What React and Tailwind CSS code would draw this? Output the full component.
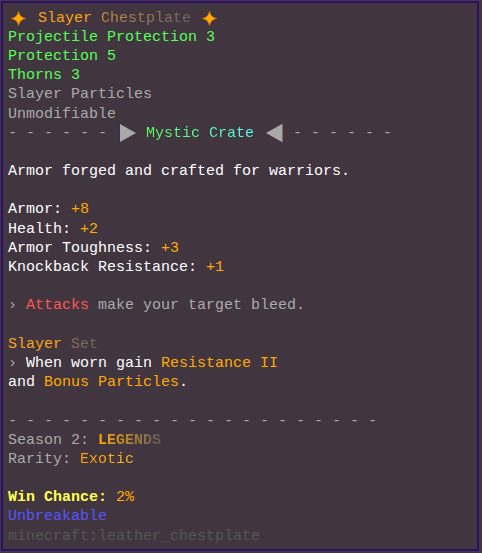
import React from 'react';

const GRAY = 'text-[#aaaaaa]';
const ORANGE = 'text-[#ffaa00]';

function Line({ children, className = '' }) {
    return <div className={`h-[19.2px] whitespace-pre ${className}`}>{children}</div>;
}

function Star() {
    return (
        <svg width="15" height="15" viewBox="0 0 16 16">
            <path d="M8 0.5 Q9.2 6.8 15.5 8 Q9.2 9.2 8 15.5 Q6.8 9.2 0.5 8 Q6.8 6.8 8 0.5Z" fill="#ffab00" stroke="#e07a00" strokeWidth="0.8" />
        </svg>
    );
}

function Arrow({ left }) {
    return (
        <svg width="17" height="18" viewBox="0 0 17 18">
            {left ? (
                <>
                    <polygon points="16,0 16,18 0,9" fill="#a9a9a9" />
                    <line x1="16.5" y1="0" x2="16.5" y2="18" stroke="#8a6a4a" strokeWidth="1" />
                </>
            ) : (
                <>
                    <polygon points="1,0 1,18 17,9" fill="#a9a9a9" />
                    <line x1="0.5" y1="0" x2="0.5" y2="18" stroke="#3b2a6a" strokeWidth="1" />
                </>
            )}
        </svg>
    );
}

function Grad({ from, to, children, bold }) {
    return (
        <span
            className={`bg-clip-text text-transparent ${bold ? 'font-bold' : ''}`}
            style={{ backgroundImage: `linear-gradient(to right, ${from}, ${to})` }}
        >
            {children}
        </span>
    );
}

export default function App() {
    return (
        <div className="w-[482px] h-[553px] bg-[#41353f] pt-[1px] pl-[1px]">
            <div className="w-[478px] h-[550px] border-2 border-[#2d0f6b] pt-[5.6px] pl-[5px] font-['Liberation_Mono',monospace] text-[15px] leading-[19.2px] text-white">
                <Line className="flex items-center">
                    <span className="w-[21px] flex"><span className="ml-[3px] flex"><Star /></span></span>
                    <span>{' '}</span>
                    <span className="text-[#f7a419]">Slayer</span>
                    <span>{' '}</span>
                    <Grad from="#c58d3e" to="#676767">Chestplate</Grad>
                    <span>{' '}</span>
                    <span className="ml-[2px] flex"><Star /></span>
                </Line>
                <Line className="text-[#55ff55]">Projectile Protection 3</Line>
                <Line className="text-[#55ff55]">Protection 5</Line>
                <Line className="text-[#55ff55]">Thorns 3</Line>
                <Line className={GRAY}>Slayer Particles</Line>
                <Line className={GRAY}>Unmodifiable</Line>
                <Line className="flex items-center">
                    <span className={GRAY}>- - - - - - </span>
                    <span className="w-[21px] flex"><span className="ml-[3px] flex"><Arrow /></span></span>
                    <span>{' '}</span>
                    <Grad from="#55ff55" to="#55ffee">Mystic Crate</Grad>
                    <span>{' '}</span>
                    <span className="w-[21px] flex"><span className="ml-[3px] flex"><Arrow left /></span></span>
                    <span className={GRAY}> - - - - - -</span>
                </Line>
                <Line>{' '}</Line>
                <Line>Armor forged and crafted for warriors.</Line>
                <Line>{' '}</Line>
                <Line>Armor: <span className={ORANGE}>+8</span></Line>
                <Line>Health: <span className={ORANGE}>+2</span></Line>
                <Line>Armor Toughness: <span className={ORANGE}>+3</span></Line>
                <Line>Knockback Resistance: <span className={ORANGE}>+1</span></Line>
                <Line>{' '}</Line>
                <Line className={GRAY}>› <span className="text-[#ff5555]">Attacks</span> make your target bleed.</Line>
                <Line>{' '}</Line>
                <Line>
                    <span className="text-[#f7a419]">Slayer</span> <Grad from="#8a7650" to="#666666">Set</Grad>
                </Line>
                <Line><span className={GRAY}>›</span> When worn gain <span className={ORANGE}>Resistance II</span></Line>
                <Line>and <span className={ORANGE}>Bonus Particles</span>.</Line>
                <Line>{' '}</Line>
                <Line className={GRAY}>- - - - - - - - - - - - - - - - - - - - -</Line>
                <Line className={GRAY}>Season 2: <Grad from="#ffaa00" to="#5e5e5e" bold>LEGENDS</Grad></Line>
                <Line className={GRAY}>Rarity: <Grad from="#ffa000" to="#ffbb22">Exotic</Grad></Line>
                <Line>{' '}</Line>
                <Line><span className="font-bold text-[#ffff55]">Win Chance:</span> <span className={ORANGE}>2%</span></Line>
                <Line className="text-[#5555ff]">Unbreakable</Line>
                <Line className="text-[#555555]">minecraft:leather_chestplate</Line>
            </div>
        </div>
    );
}
